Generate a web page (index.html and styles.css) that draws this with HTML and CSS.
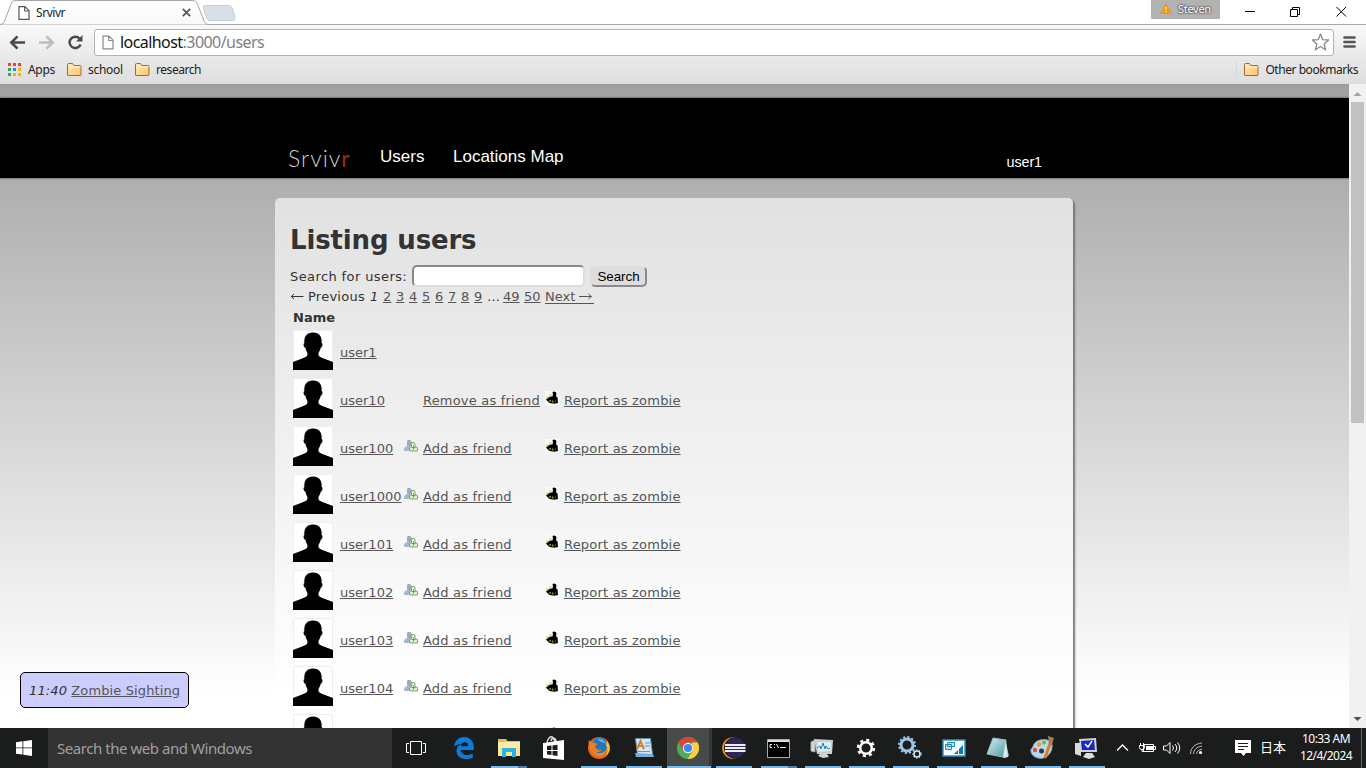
FILE: index.html
```html
<!DOCTYPE html>
<html lang="en">
<head>
<meta charset="utf-8">
<title>Srvivr</title>
<link rel="stylesheet" href="styles.css">
</head>
<body>
<svg class="defs" width="0" height="0">
  <defs>
    <linearGradient id="folderFill" x1="0" y1="0" x2="1" y2="1"><stop offset="0" stop-color="#ffe9b8"/><stop offset="1" stop-color="#fbc56b"/></linearGradient>
    <linearGradient id="tabFill" x1="0" y1="0" x2="0" y2="1"><stop offset="0" stop-color="#fff"/><stop offset="1" stop-color="#f9f9f9"/></linearGradient>
    <radialGradient id="foxFill"><stop offset="0" stop-color="#ffcb35"/><stop offset="1" stop-color="#e2591b"/></radialGradient>
    <linearGradient id="glass" x1="0" y1="0" x2="1" y2="1"><stop offset="0" stop-color="#dbeef0"/><stop offset="1" stop-color="#4d9aa8"/></linearGradient>
  </defs>
  <symbol id="avatar" viewBox="0 0 40 40">
    <path fill="#fff" d="M0 0h40v40H0z"/><path fill="none" stroke="#eee" d="M.5 40V.5h39V40"/>
    <path d="M0 40v-8c4-1.600 9-3.200 13-5.300 1.500-.8 1.700-2.500 1.200-4.200-.8-1.500-1.500-3-1.900-4.700-1.300-.5-1.900-2-1.700-3.500.1-.8.300-1.200.8-1.400C10.800 7 13.500 2.600 20 2.600S29.200 7 28.600 12.900c.6.300.9.800.9 1.600 0 1.500-.6 2.800-1.800 3.400-.4 1.700-1.200 3.300-2 4.700-.5 1.700-.3 3.400 1.200 4.200 4 2 9 3.500 13.100 5.200v8z"/>
  </symbol>
  <symbol id="zombie" viewBox="0 0 14 14">
    <path fill="#fafbf5" d="M0 0h14v14H0z"/><path fill="#dbe8ae" d="M1 5h3v3H1zM4 3h3v3H4zM11 6h2v3h-2z"/>
    <path d="M7.500 1l1.500-.5 2 .8.500 2-.7 1.700 1.700 1.500.5 5.500-4 .7-4.500-.7L2 9.800 1 8.500l3.500-2.500 3-.8.500-1.700z"/>
    <path fill="#8aac38" d="M4.500 9h1.300v2H4.500zM7 10.500l1-2 .7 3-1.200.3zM10 9.500h1v1h-1z"/>
  </symbol>
  <symbol id="addfriend" viewBox="0 0 14 14">
    <path fill="#9ba9c6" d="M3.500 1h3L7.500 3v3L6 8H4L3 6V3z"/><path fill="#a7b4cd" d="M0 11c0-2.500 2-4 4-4.300h3v5.300H0z"/><path fill="#dcefd0" stroke="#78b354" d="M7.500 3.500h2.500l1 1.500v2.500l2.500 1v3.500H6L5.500 9l2-1.500z"/><path stroke="#56a838" d="M7.500 8.500h4M9.500 6.500v4"/>
  </symbol>
  <symbol id="folder" viewBox="0 0 16 14">
    <path fill="url(#folderFill)" stroke="#9c6c35" d="M1.500 12V1.500q0-1 1-1h4l1.500 2h6q1 0 1 1V12q0 .5-.7.500H2.200q-.7 0-.7-.5z"/><path stroke="#fff3d2" d="M2.500 4h12"/>
  </symbol>
  <symbol id="page" viewBox="0 0 12 14"><path fill="#fff" stroke="currentColor" stroke-width="1.200" d="M1 .7h6L11 4.700v8.600H1zM6.700.7V5H11"/></symbol>
</svg>

<div class="tabstrip">
  <svg class="tab-shape" width="240" height="25" viewBox="0 0 240 25">
    <path fill="url(#tabFill)" stroke="#a8a8a8" d="M0 24.500q3 0 4.500-3L11 4q1.500-3.500 4-3.500h178q3 0 4.500 3.500l6.500 17q1.500 3.500 4 3.500"/>
    <path fill="#d9dfe7" stroke="#c7ced7" d="M205 5.500h24q2 0 3 2l3 10q.6 3-2 3h-23q-2 0-3-2l-3.500-10q-1-3 1.500-3z"/>
  </svg>
  <div class="tab">
    <svg class="tab-page" width="12" height="14"><use href="#page"/></svg>
    <span class="tab-title">Srvivr</span>
    <svg width="9" height="9" viewBox="0 0 9 9"><path stroke="#555" stroke-width="1.700" d="M.8.800l7.400 7.400M8.200.800L.8 8.200"/></svg>
  </div>
  <div class="profile">
    <svg width="12" height="11" viewBox="0 0 12 11"><path fill="#f09a13" d="M6 0l6 11H0z"/><path stroke="#fff" d="M6 4v3M6 8v1"/></svg>
    <span>Steven</span>
  </div>
  <svg class="winbtns" width="104" height="14" viewBox="0 0 104 14" fill="none" stroke="#000">
    <path d="M0 6.500h10M45.500 4.500h7v7h-7zM47.500 4.500v-2h7v7h-2M91.500 2l9.500 9.500M101 2l-9.500 9.500"/>
  </svg>
</div>

<div class="toolbar">
  <svg class="nav" width="78" height="18" viewBox="0 0 78 18" fill="none">
    <path stroke="#4a4a4a" stroke-width="2.600" d="M1.500 9.500H16M8.500 3.300L2.300 9.500l6.200 6.200"/>
    <path stroke="#bdbdbd" stroke-width="2.600" d="M30 9.500h14.500M37.500 3.300l6.200 6.200-6.200 6.200"/>
    <path stroke="#4a4a4a" stroke-width="2.500" d="M70.500 5.500A5.700 5.700 0 1 0 71.600 11.500"/><path fill="#4a4a4a" d="M73.500 2v6.500H67z"/>
  </svg>
  <div class="omnibox">
    <svg class="url-page" width="12" height="15"><use href="#page"/></svg>
    <span class="url">localhost<i>:3000/users</i></span>
    <svg class="star" width="19" height="18" viewBox="0 0 19 18"><path fill="#fff" stroke="#888" stroke-width="1.300" stroke-linejoin="round" d="M9.500 1l2.200 5.600 6 .4-4.600 3.900 1.500 5.900-5.100-3.300-5.100 3.300L5.900 10.900 1.300 7l6-.4z"/></svg>
  </div>
  <svg width="13" height="12" viewBox="0 0 13 12"><path stroke="#555" stroke-width="2.700" stroke-linecap="round" d="M1.500 1.500h10M1.500 6h10M1.500 10.500h10"/></svg>
</div>

<div class="bookmarks">
  <svg width="13" height="13" viewBox="0 0 13 13"><path fill="#ea4335" d="M0 0h3v3H0zM5 0h3v3H5zM10 0h3v3h-3z"/><path fill="#34a853" d="M0 5h3v3H0zM0 10h3v3H0z"/><path fill="#2a84fc" d="M5 5h3v3H5z"/><path fill="#fbae05" d="M10 5h3v3h-3zM5 10h3v3H5zM10 10h3v3h-3z"/></svg>
  <span class="bm bm-apps">Apps</span>
  <svg width="16" height="14"><use href="#folder"/></svg>
  <span class="bm bm-school">school</span>
  <svg width="16" height="14"><use href="#folder"/></svg>
  <span class="bm bm-research">research</span>
  <div class="other">
    <svg width="16" height="14"><use href="#folder"/></svg>
    <span class="bm">Other bookmarks</span>
  </div>
</div>

<div class="viewport">
  <div class="site">
    <header class="site-header">
      <div class="header-inner">
        <div class="logo">Srviv<b>r</b></div>
        <a class="nav-users">Users</a>
        <a class="nav-map">Locations Map</a>
        <a class="nav-me">user1</a>
      </div>
    </header>
    <main class="panel">
      <h1>Listing users</h1>
      <div class="search"><label>Search for users:</label><input type="text"><button>Search</button></div>
      <div class="pages"><svg width="14" height="9" viewBox="0 0 14 9"><path fill="none" stroke="#333" d="M13.500 4.500H1M4 2L1.200 4.500 4 7"/></svg><span class="prev">Previous</span><em>1</em><a>2</a><a>3</a><a>4</a><a>5</a><a>6</a><a>7</a><a>8</a><a>9</a><span class="gap">…</span><a class="two">49</a><a class="two">50</a><a class="next">Next <svg width="13" height="7" viewBox="0 0 13 7"><path fill="none" stroke="#555" d="M0 3.500h12.500M9.500 1l2.800 2.500L9.500 6"/></svg></a></div>
      <div class="th">Name</div>
      <div class="row"><svg class="av"><use href="#avatar"/></svg><a class="who">user1</a></div>
      <div class="row"><svg class="av"><use href="#avatar"/></svg><a class="who">user10</a><span></span><a>Remove as friend</a><svg class="ic"><use href="#zombie"/></svg><a>Report as zombie</a></div>
      <div class="row"><svg class="av"><use href="#avatar"/></svg><a class="who">user100</a><svg class="ic"><use href="#addfriend"/></svg><a>Add as friend</a><svg class="ic"><use href="#zombie"/></svg><a>Report as zombie</a></div>
      <div class="row"><svg class="av"><use href="#avatar"/></svg><a class="who">user1000</a><svg class="ic"><use href="#addfriend"/></svg><a>Add as friend</a><svg class="ic"><use href="#zombie"/></svg><a>Report as zombie</a></div>
      <div class="row"><svg class="av"><use href="#avatar"/></svg><a class="who">user101</a><svg class="ic"><use href="#addfriend"/></svg><a>Add as friend</a><svg class="ic"><use href="#zombie"/></svg><a>Report as zombie</a></div>
      <div class="row"><svg class="av"><use href="#avatar"/></svg><a class="who">user102</a><svg class="ic"><use href="#addfriend"/></svg><a>Add as friend</a><svg class="ic"><use href="#zombie"/></svg><a>Report as zombie</a></div>
      <div class="row"><svg class="av"><use href="#avatar"/></svg><a class="who">user103</a><svg class="ic"><use href="#addfriend"/></svg><a>Add as friend</a><svg class="ic"><use href="#zombie"/></svg><a>Report as zombie</a></div>
      <div class="row"><svg class="av"><use href="#avatar"/></svg><a class="who">user104</a><svg class="ic"><use href="#addfriend"/></svg><a>Add as friend</a><svg class="ic"><use href="#zombie"/></svg><a>Report as zombie</a></div>
      <div class="row"><svg class="av"><use href="#avatar"/></svg><span></span><span></span><span></span><svg class="ic"><use href="#zombie"/></svg></div>
    </main>
    <div class="alert"><em>11:40</em> <a>Zombie Sighting</a></div>
  </div>
  <div class="scrollbar">
    <svg width="17" height="17" viewBox="0 0 17 17"><path fill="#a3a3a3" d="M4.500 12L8.500 8l4 4z"/></svg>
    <div class="thumb"></div>
    <svg class="down" width="17" height="17" viewBox="0 0 17 17"><path fill="#505050" d="M4.500 6h8l-4 4z"/></svg>
  </div>
</div>

<div class="taskbar">
  <div class="start"><svg width="16" height="16" viewBox="0 0 16 16"><path fill="#fff" d="M0 2.300L6.500 1.300v6.200H0zM7.300 1.200L16 0v7.500H7.300zM0 8.300h6.500v6.200L0 13.700zM7.300 8.300H16V16l-8.700-1.200z"/></svg></div>
  <div class="tsearch">Search the web and Windows</div>
  <div class="ti view"><svg width="20" height="14" viewBox="0 0 20 14" fill="none" stroke="#fff"><path d="M4.500.500h11v13h-11zM3 2.500H.5v9H3M17 2.500h2.500v9H17"/></svg></div>
  <div class="ti wide"><svg width="22" height="24" viewBox="0 0 22 24"><path fill="#0b7bdc" d="M1 11C2 4 6 1 11 1c6 0 9.800 4.500 9.800 10v3H7.500c.3 3.500 3.500 5 6.500 5 2.300 0 4.300-.6 5.800-1.500v4.200C18 22.600 15.500 23 13 23c-6 0-9.500-3.600-9.500-8 0-3.500 2-6 5-7.200C5.500 8 2.500 9.300 1 11zM7.700 10.200h7.600c0-2.400-1.200-4-3.500-4-2.400 0-3.900 1.800-4.100 4z"/></svg></div>
  <div class="ti wide run multi"><svg width="22" height="22" viewBox="0 0 22 22"><path fill="#e8bd4b" d="M0 3V2h8l1.500 2H22v4H0z"/><path fill="#fde48f" d="M0 5h22v14H0z"/><path fill="#fff1b5" d="M0 5h22v6H0z" opacity=".6"/><path fill="#2bb2e8" d="M4 20v-9h14v9h-4v-5H8v5z"/></svg></div>
  <div class="ti wide store"><svg width="22" height="25" viewBox="0 0 22 25"><path fill="none" stroke="#ddd" stroke-width="1.500" d="M4 8C4 2 8 .500 9 1s3 3 3 6M8 5c1-4 5-4 5 1"/><path fill="#fff" d="M0 7l21-3v20L0 22z"/><path fill="#1c1e1e" d="M4 10l4.500-.5V14H4zM9.500 9.400l5-.6V14h-5zM4 15h4.500v4L4 18.500zM9.500 15h5v5l-5-.7z"/></svg></div>
  <div class="ti wide run"><svg width="24" height="24" viewBox="0 0 24 24"><circle cx="12" cy="12" r="11" fill="url(#foxFill)"/><circle cx="12.500" cy="9.500" r="7.800" fill="#2376bb"/><path fill="#54b6e5" d="M10 3c4-1 8 1 9 5-2-2-4-1-5-2z"/><path fill="#ef7d1e" d="M2 4l3 3c2-1 4 0 5 1.500l-2 2c1 3 4 4 7 3-2 3-6 4-9 1-4-2-5-7-4-10.500z"/><path fill="#ffc629" d="M20 5c4 4 3 12-1 15 2-4 2-8 0-11z"/></svg></div>
  <div class="ti wide run"><svg width="22" height="22" viewBox="0 0 22 22"><path fill="#d5e6f4" stroke="#5c91be" d="M2.500 1.500h15l2 16h-15z"/><path fill="#7aadd8" d="M2 16l18 1 1 3H3z"/><path fill="none" stroke="#e37c20" stroke-width="2" d="M4 12L7.500 4 11 12M5.500 9h4"/><path stroke="#5f9acb" d="M12 6h5M12 9h5M5 14.500h12"/></svg></div>
  <div class="ti wide run chrome"><svg width="22" height="22" viewBox="0 0 22 22"><circle cx="11" cy="11" r="11" fill="#4caf50"/><path fill="#db4437" d="M1.500 5.500A11 11 0 0 1 20.500 5.500H11L6 14z"/><path fill="#ffcd40" d="M20.500 5.500A11 11 0 0 1 10.500 22L15.800 13.700 15 5.500z"/><circle cx="11" cy="11" r="5.200" fill="#f1f1f1"/><circle cx="11" cy="11" r="4.100" fill="#4285f4"/></svg></div>
  <div class="ti wide run"><svg width="24" height="22" viewBox="0 0 24 22"><circle cx="11" cy="11" r="10.800" fill="#f7941e"/><ellipse cx="13" cy="11" rx="11" ry="10.700" fill="#1c1e1e"/><circle cx="13.200" cy="11" r="10.200" fill="#2f2459"/><path stroke="#eee" stroke-width="1.800" d="M3 8h20.500M3 11h20.500M3 14h20.500"/></svg></div>
  <div class="ti run multi"><svg width="23" height="19" viewBox="0 0 23 19"><path fill="#000" stroke="#aaa" d="M.5.500h22v18H.5z"/><path stroke="#ddd" stroke-width="2" d="M1 2h21"/><path fill="none" stroke="#eee" d="M5 5.500H3v3h2M7.500 5v1M7.500 8v1M9.500 5l2 4M13 8.500h6"/></svg></div>
  <div class="ti run"><svg width="24" height="22" viewBox="0 0 24 22"><path fill="#d8dad9" stroke="#a6aaa9" d="M1 5l4-2v12l-4-1z"/><path fill="#ccc" d="M4 2l19 1-1 14H7z"/><path fill="#d9eef5" d="M7 5h14v9l-13 1z"/><path fill="none" stroke="#267aac" d="M7 11l3-2 1 3 2-6 2 6 1-3 2 3 2-1"/><path fill="#d2d4d4" d="M10 17h7l2 3-6 1-5-2z"/></svg></div>
  <div class="ti run"><svg width="20" height="20" viewBox="-10 -10 20 20" fill="none" stroke="#fff"><circle r="5.800" stroke-width="2.500"/><circle r="7.900" stroke-width="2.600" stroke-dasharray="3.100" /></svg></div>
  <div class="ti run"><svg width="24" height="24" viewBox="0 0 24 24" fill="none" stroke="#9ac6e9"><circle cx="9" cy="9" r="6" stroke-width="3"/><circle cx="9" cy="9" r="8" stroke-width="2" stroke-dasharray="2.100"/><circle cx="19" cy="18" r="3" stroke="#d1e7f6" stroke-width="1.600"/><circle cx="19" cy="18" r="4.200" stroke="#d1e7f6" stroke-dasharray="1.500"/></svg></div>
  <div class="ti run"><svg width="24" height="18" viewBox="0 0 24 18"><path fill="#f3f9fc" stroke="#2c91be" stroke-width="1.500" d="M1 1h22v16H1z"/><path fill="#c2e4f2" stroke="#2587b2" d="M5.500 3.500h7v4h-7zM3.500 5.500h6v5h-6z"/><path fill="#137aa8" d="M12 15l4-4v4zM17 15v-5l4-4v9z"/></svg></div>
  <div class="ti run"><svg width="24" height="22" viewBox="0 0 24 22"><path fill="#c1aa76" d="M19 2l4 17-5 2z"/><path fill="url(#glass)" stroke="#9dbec4" d="M7 1l13 2-3 17-16-3z"/><path fill="#d6ebed" d="M20 3l2 17-5 1z"/></svg></div>
  <div class="ti run"><svg width="24" height="24" viewBox="0 0 24 24"><path fill="#b8d9ec" stroke="#6ea0bf" d="M10 4c8-2 13 2 12 8-1 7-8 12-14 10-5-1-8-5-7-9 3-1 1-7 9-9z"/><circle cx="5" cy="14" r="2.200" fill="#d85445"/><circle cx="9" cy="8.500" r="2.200" fill="#f19b24"/><circle cx="14" cy="6.500" r="2" fill="#62b94a"/><circle cx="11.500" cy="15" r="2.500" fill="#263b48"/><path stroke="#dd7c26" stroke-width="3" d="M21 5l-6 17"/><path fill="#a77c50" d="M18 0l6 2-2 7-3-1z"/></svg></div>
  <div class="ti run"><svg width="24" height="22" viewBox="0 0 24 22"><path fill="#dadcd6" d="M1 6h6v13l-6-2z"/><path fill="#cfd1ce" d="M5 2l17-1 1 14H7z"/><path fill="#1925c8" d="M7 4l13-1 1 10H8z"/><path fill="none" stroke="#fff" stroke-width="1.500" d="M11 7l3 3 4-6"/><path fill="#dedfdb" d="M12 16h6l3 4-6 2-6-2z"/></svg></div>
  <svg class="tray" width="88" height="20" viewBox="0 0 88 20" fill="none" stroke="#fff">
    <path stroke-width="1.300" d="M0 12.500l5.500-5.500 5.500 5.500"/>
    <path d="M26.500 6.500h10v7h-10zM37 8.500h1.500v3H37M22.500 7.500h5v2q0 2-2.500 2t-2.500-2zM23.500 5v2.500M26.500 5v2.500M25 11.500v2h3"/><path fill="#fff" stroke="none" d="M29 8h7v4h-7z"/>
    <path d="M46.500 8v4h3l3.500 3.500v-11L49.500 8zM55.500 7.500q2 2.500 0 5M58 6q3.500 4 0 8M60.500 4.500q4.500 5.500 0 11"/>
    <path stroke="#bbb" d="M73.500 16C73.500 10 78 5.500 85 5M76.500 16C76.500 12 80 8.500 85 8.200M79.500 16c0-2.500 2.500-4.600 5.500-4.800"/><circle cx="83.500" cy="14.500" r="1.600" fill="#fff" stroke="none"/>
  </svg>
  <svg class="note" width="16" height="16" viewBox="0 0 16 16"><path fill="#fff" d="M0 0h16v13h-5l-2.500 3L6 13H0z"/><path stroke="#1b1d1d" d="M3 3.500h10M3 6.500h10M3 9.500h6"/></svg>
  <span class="ime">日本</span>
  <div class="clock"><span>10:33 AM</span><span class="date">12/4/2024</span></div>
  <div class="peek"></div>
</div>
</body>
</html>
```
FILE: styles.css
```css
* { box-sizing: border-box; }
html, body { margin: 0; height: 768px; overflow: hidden; }
body { display: flex; flex-direction: column; width: 1366px; background: #fff; font-family: "Noto Sans", "Open Sans", sans-serif; }
svg { display: block; flex: none; }
.defs { position: absolute; }

/* browser chrome */
.tabstrip { position: relative; height: 25px; flex: none; display: flex; align-items: flex-start; background: #fff; border-bottom: 1px solid #a8a8a8; }
.tab-shape { position: absolute; left: 0; top: 0; }
.tab { position: relative; display: flex; align-items: center; height: 25px; width: 191px; padding-left: 18px; font-size: 12px; color: #222; }
.tab-page { color: #555; }
.tab-title { flex: 1; padding-left: 6px; letter-spacing: -.45px; }
.profile { margin-left: 960px; width: 69px; height: 19px; background: #b2b2b2; display: flex; align-items: center; padding-left: 9px; gap: 6px; font-size: 11px; line-height: 17px; padding-bottom: 2px; letter-spacing: -.3px; color: #fff; text-shadow: 0 0 2px #333, 0 0 2px #333; }
.profile svg { margin-top: -1px; }
.winbtns { margin: 5px 0 0 25px; }
.toolbar { height: 32px; flex: none; display: flex; align-items: center; padding: 2px 10px 0 9px; background: linear-gradient(#f9f9f9, #e9e9e9); }
.omnibox { width: 1240px; height: 27px; margin: 0 9px 0 7px; border: 1px solid #b2b2b2; border-radius: 3px; background: #fff; display: flex; align-items: center; padding: 0 3px 0 7px; }
.url-page { color: #888; }
.url { flex: 1; padding-left: 6px; font-size: 16px; letter-spacing: -.56px; line-height: 24px; color: #111; }
.url i { font-style: normal; color: #808080; }
.bookmarks { height: 27px; flex: none; display: flex; align-items: center; padding: 0 8px 2px; background: linear-gradient(#e9e9e9, #dedede); color: #222; font-size: 12px; }
.bm { letter-spacing: -.45px; padding-left: 6px; }
.bm-apps { width: 45px; padding-left: 7px; letter-spacing: -.3px; }
.bm-school { width: 52px; padding-left: 6px; letter-spacing: -.3px; }
.other { margin-left: auto; display: flex; align-items: center; padding-left: 6px; border-left: 1px solid #cddbe5; }
.other .bm { padding-left: 6px; white-space: nowrap; }

/* web page */
.viewport { height: 644px; flex: none; display: flex; overflow: hidden; }
.site { position: relative; width: 1349px; height: 644px; overflow: hidden; background: linear-gradient(#a0a0a0, #fff 610px); font-family: "DejaVu Sans", sans-serif; font-size: 13px; color: #333; border-top: 1px solid #999; }
.site-header { margin-top: 13px; height: 80px; background: #000; box-shadow: 0 0 2px #333; }
.header-inner { width: 800px; margin-left: 275px; padding-top: 47px; display: flex; color: #fff; font-family: "Liberation Sans", sans-serif; font-size: 17px; line-height: 24px; white-space: nowrap; }
.logo { width: 92px; margin-left: 13px; margin-top: 1px; font-family: Lato, sans-serif; font-weight: 300; font-size: 23px; letter-spacing: 1px; color: #ccc; }
.logo b { font-weight: 400; color: #a32a10; }
.nav-users { width: 73px; }
.nav-me { margin-left: auto; margin-right: 33px; margin-top: 5px; font-size: 14.4px; letter-spacing: -.1px; }
.panel { margin: 20px 0 0 275px; width: 798px; height: 900px; border-radius: 5px; background: rgba(255,255,255,.62); box-shadow: 2px 2px 2px #777; padding: 24px 15px 0; }
h1 { margin: 0; font-size: 26px; line-height: 37px; letter-spacing: -.15px; }
.search { display: flex; align-items: center; height: 22px; margin-top: 6px; }
.search label { width: 122px; white-space: nowrap; letter-spacing: .4px; }
.search input { width: 173px; height: 22px; border: 2px inset #ddd; border-radius: 5px; }
.search button { margin-left: 5px; width: 57px; height: 21px; padding: 0; border: 2px outset #ddd; border-radius: 5px; background: #ddd; font: 13.333px "Liberation Sans", sans-serif; }
.pages { display: flex; align-items: center; height: 18px; white-space: nowrap; }
.prev { width: 66px; padding-left: 4px; letter-spacing: .25px; }
.pages em { width: 13px; }
.pages a { width: 8px; margin-right: 5px; }
.gap { width: 16px; }
.pages .two { width: 16px; }
.pages .next { width: 49px; display: flex; align-items: center; gap: 4px; text-decoration: none; border-bottom: 1px solid #555; height: 15px; line-height: 15px; margin-top: 1px; }
a { color: #555; text-decoration: underline; white-space: nowrap; }
.header-inner a { color: #fff; text-decoration: none; }
.th { padding-left: 3px; height: 23px; line-height: 25px; font-weight: bold; }
.row { height: 48px; padding: 2px 0 0 3px; display: grid; grid-template-columns: 47px 65px 18px 123px 18px 1fr; line-height: 46px; letter-spacing: .2px; }
.row .who { letter-spacing: 0; }
.av { width: 40px; height: 40px; }
.ic { width: 14px; height: 14px; margin: 13px 0 0 -1px; }
.alert { position: absolute; left: 20px; top: 587px; width: 169px; height: 36px; border: 1px solid #000; border-radius: 5px; background: #ccf; line-height: 35px; padding-left: 8px; white-space: nowrap; letter-spacing: .12px; }
.scrollbar { width: 17px; background: #f1f1f1; display: flex; flex-direction: column; }
.thumb { width: 13px; height: 321px; margin: 1px 2px; background: #c1c1c1; }
.down { margin-top: auto; }

/* taskbar */
.taskbar { height: 40px; flex: none; display: flex; align-items: center; background: #1b1d1d; color: #fff; }
.start { width: 48px; display: flex; justify-content: center; }
.tsearch { width: 344px; height: 40px; background: #333; color: #a0a0a0; padding-left: 9px; font-size: 15px; line-height: 41px; letter-spacing: -.45px; }
.ti { position: relative; width: 44px; height: 40px; display: flex; align-items: center; justify-content: center; flex: none; padding-right: 2px; }
.wide { width: 45px; }
.view { margin: 0 4px 0 2px; padding: 0; }
.run::after { content: ""; position: absolute; left: 4px; bottom: 0; width: 36px; height: 2px; background: #76b9ed; }
.multi::after { background: linear-gradient(90deg, #76b9ed 27px, #507da0 27px); }
.chrome { background: #484a4a; border-right: 3px solid #353737; padding-right: 0; }
.chrome::after { left: 0; width: 44px; }
.tray { margin-left: 8px; }
.note { margin-left: 30px; }
.ime { margin-left: 9px; width: 27px; font: 13px "Noto Sans CJK JP", sans-serif; margin-top: -4px; }
.clock { margin-left: 10px; width: 58px; display: flex; flex-direction: column; align-items: center; font-size: 12px; line-height: 17px; letter-spacing: -.55px; white-space: nowrap; margin-top: -2px; }
.date { letter-spacing: -.55px; }
.peek { margin-left: auto; width: 5px; height: 40px; border-left: 1px solid #666; }
```
